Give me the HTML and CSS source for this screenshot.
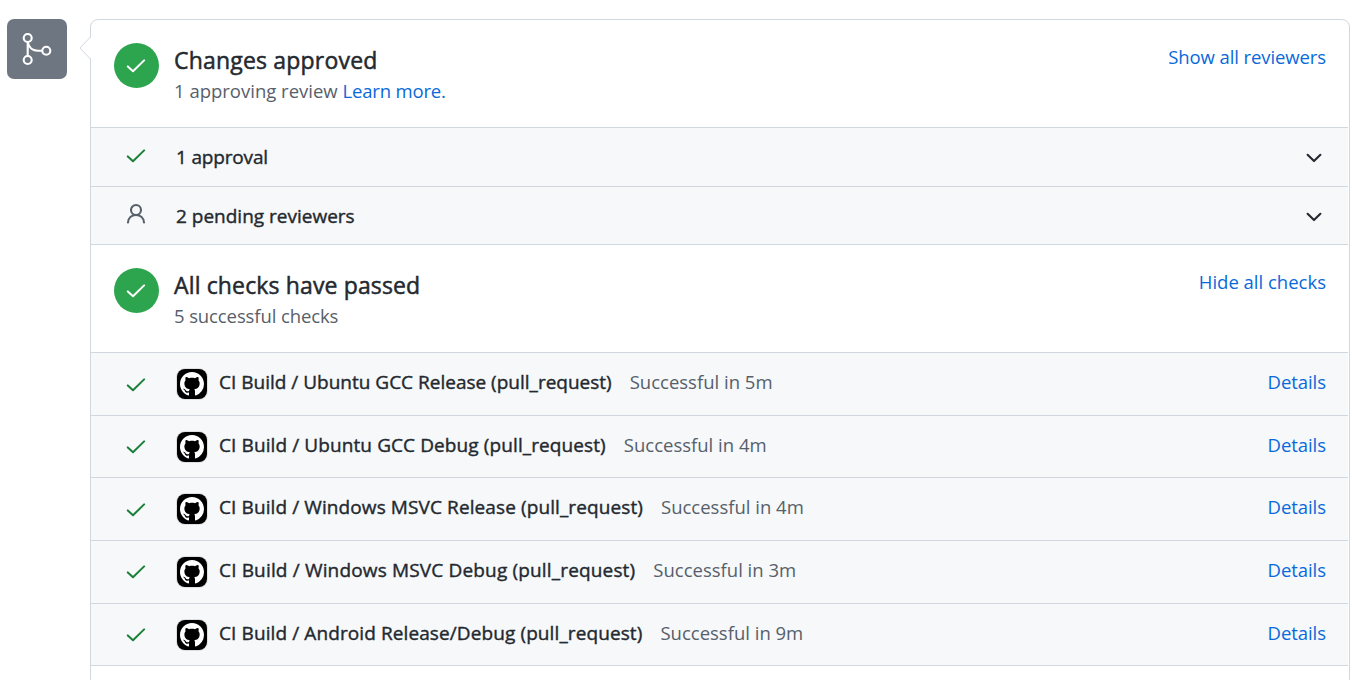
FILE: index.html
```
<!DOCTYPE html>
<html lang="en">
<head>
<meta charset="utf-8">
<title>Merge status</title>
<link rel="stylesheet" href="styles.css">
</head>
<body>
<svg class="defs" width="0" height="0" aria-hidden="true">
  <symbol id="check" viewBox="0 0 20 14"><path d="M1.8 7.4 7 12.2 18.100 1.400" fill="none" stroke="currentColor" stroke-width="2" stroke-linecap="round" stroke-linejoin="round"/></symbol>
  <symbol id="chevron" viewBox="0 0 16 10"><path d="M1.6 1.8 8 8.1l6.4-6.3" fill="none" stroke="currentColor" stroke-width="2.1" stroke-linecap="round" stroke-linejoin="round"/></symbol>
  <symbol id="mark" viewBox="0 0 16 16"><path fill="currentColor" fill-rule="evenodd" d="M8 0C3.58 0 0 3.58 0 8c0 3.54 2.29 6.53 5.47 7.59.4.07.55-.17.55-.38 0-.19-.01-.82-.01-1.49-2.01.37-2.53-.49-2.69-.94-.09-.23-.48-.94-.82-1.13-.28-.15-.68-.52-.01-.53.63-.01 1.08.58 1.23.82.72 1.21 1.87.87 2.33.66.07-.52.28-.87.51-1.07-1.78-.2-3.64-.89-3.64-3.95 0-.87.31-1.59.82-2.15-.08-.2-.36-1.02.08-2.12 0 0 .67-.21 2.2.82.64-.18 1.32-.27 2-.27s1.36.09 2 .27c1.53-1.04 2.2-.82 2.2-.82.44 1.1.16 1.92.08 2.12.51.56.82 1.27.82 2.15 0 3.07-1.87 3.75-3.65 3.95.29.25.54.73.54 1.48 0 1.07-.01 1.93-.01 2.2 0 .21.15.46.55.38A8.01 8.01 0 0 0 16 8c0-4.42-3.58-8-8-8z"/></symbol>
</svg>
<main class="timeline">
  <div class="badge">
    <svg width="60" height="60" viewBox="0 0 60 60" fill="none" stroke="#fff" stroke-width="2.1"><circle cx="20.7" cy="19" r="4"/><circle cx="20.7" cy="41" r="4"/><circle cx="39.3" cy="31.7" r="4"/><path d="M20.7 23v14M20.7 23c1 5.5 5 8.7 10 8.7h4.600"/></svg>
  </div>
  <section class="box">
    <svg class="caret" width="13" height="24" viewBox="0 0 13 24"><path d="M12 1 1 12l11 11z" fill="#fff"/><path d="M11.500 1 .8 12l10.700 11" fill="none" stroke="#d0d7de"/></svg>
    <header class="head">
      <span class="circle"><svg class="check"><use href="#check"/></svg></span>
      <div class="copy"><h3 class="t-changes">Changes approved</h3><p>1 approving review <a class="t-learn">Learn more.</a></p></div>
      <a class="action t-show">Show all reviewers</a>
    </header>
    <div class="row group">
      <svg class="check"><use href="#check"/></svg><strong class="t-one">1 approval</strong><svg class="chevron"><use href="#chevron"/></svg>
    </div>
    <div class="row group pending">
      <svg class="person" viewBox="0 0 20 21" fill="none" stroke="currentColor" stroke-width="2.1" stroke-linecap="round"><circle cx="10" cy="7" r="5"/><path d="M2 19.500C2.300 15 5.600 12 10 12s7.700 3 8 7.500"/></svg><strong class="t-two">2 pending reviewers</strong><svg class="chevron"><use href="#chevron"/></svg>
    </div>
    <header class="head second">
      <span class="circle"><svg class="check"><use href="#check"/></svg></span>
      <div class="copy"><h3 class="t-all">All checks have passed</h3><p class="t-five">5 successful checks</p></div>
      <a class="action">Hide all checks</a>
    </header>
    <div class="row ci">
      <svg class="check"><use href="#check"/></svg><span class="avatar"><svg><use href="#mark"/></svg></span><strong class="name n1">CI Build / Ubuntu GCC Release (pull_request)</strong><span class="result">Successful in 5m</span><a class="details">Details</a>
    </div>
    <div class="row ci short raised">
      <svg class="check"><use href="#check"/></svg><span class="avatar"><svg><use href="#mark"/></svg></span><strong class="name n2">CI Build / Ubuntu GCC Debug (pull_request)</strong><span class="result">Successful in 4m</span><a class="details">Details</a>
    </div>
    <div class="row ci">
      <svg class="check"><use href="#check"/></svg><span class="avatar"><svg><use href="#mark"/></svg></span><strong class="name n3">CI Build / Windows MSVC Release (pull_request)</strong><span class="result">Successful in 4m</span><a class="details">Details</a>
    </div>
    <div class="row ci raised">
      <svg class="check"><use href="#check"/></svg><span class="avatar"><svg><use href="#mark"/></svg></span><strong class="name n4">CI Build / Windows MSVC Debug (pull_request)</strong><span class="result">Successful in 3m</span><a class="details">Details</a>
    </div>
    <div class="row ci short raised">
      <svg class="check"><use href="#check"/></svg><span class="avatar"><svg><use href="#mark"/></svg></span><strong class="name n5">CI Build / Android Release/Debug (pull_request)</strong><span class="result">Successful in 9m</span><a class="details">Details</a>
    </div>
    <div class="tail"></div>
  </section>
</main>
</body>
</html>
```
FILE: styles.css
```
* { box-sizing: border-box; }
body { margin: 0; height: 680px; overflow: hidden; background: #fff; color: #24292f; font: 18.5px/26px "Open Sans", "Noto Sans", sans-serif; }
.defs { position: absolute; }
.timeline { display: flex; align-items: flex-start; gap: 23px; padding: 19px 18px 0 7px; }
.badge { width: 60px; height: 60px; border-radius: 7px; background: #6e7781; flex: none; }
.badge svg { display: block; }
.box { position: relative; flex: 1; height: 680px; border: 1px solid #d0d7de; border-radius: 8px; padding-right: 1px; }
.caret { position: absolute; left: -12px; top: 16px; }
.head { display: flex; height: 107px; padding: 23px 22px 0 23px; align-items: flex-start; }
.head.second { height: 108px; border-top: 1px solid #d0d7de; }
.circle { width: 45px; height: 45px; padding-right: 1px; border-radius: 50%; background: #2da44e; color: #fff; display: flex; align-items: center; justify-content: center; flex: none; }
.check { width: 20px; height: 14px; flex: none; color: #1a7f37; }
.circle .check { color: #fff; }
.copy { margin-left: 15px; flex: 1; white-space: nowrap; }
h3 { margin: 2px 0 0; font-size: 23px; line-height: 30px; font-weight: 400; -webkit-text-stroke: 0.5px currentColor; }
p { margin: 3px 0 0; color: #57606a; line-height: 26px; }
a { color: #0969da; }
.t-changes { letter-spacing: 0.19px; }
.t-all { letter-spacing: 0.14px; }
.t-learn { letter-spacing: -0.17px; }
.t-show { letter-spacing: -0.1px; }
.t-five { letter-spacing: -0.11px; }
.action { margin-top: 1px; white-space: nowrap; }
.row { display: flex; align-items: flex-start; background: #f6f8fa; border-top: 1px solid #d0d7de; padding: 0 22px 0 35px; white-space: nowrap; }
.group { height: 59px; }
.group.pending { height: 58px; }
.group .check { margin-top: 21px; }
.group strong { margin: 16px 0 0 30px; }
.person { width: 20px; height: 21px; margin-top: 16px; color: #57606a; }
.chevron { width: 16px; height: 10px; margin: 25px 4px 0 auto; }
strong { font-size: 19px; font-weight: 400; -webkit-text-stroke: 0.4px currentColor; }
.t-one { letter-spacing: -0.17px; }
.ci { height: 63px; }
.ci.short { height: 62px; }
.ci .check { margin-top: 25px; }
.ci.raised .check { margin-top: 24px; }
.avatar { width: 30px; height: 30px; margin: 16px 0 0 31px; border-radius: 8px; background: #000; color: #fff; display: flex; align-items: center; justify-content: center; box-shadow: 0 0 0 1px #dedfe1; }
.avatar svg { width: 24px; height: 24px; }
.name { margin: 16px 0 0 12px; }
.n2, .n3, .n5 { letter-spacing: 0.1px; }
.n4 { letter-spacing: 0.16px; }
.result { margin: 16px 0 0 18px; color: #57606a; }
.details { margin: 16px 0 0 auto; letter-spacing: -0.06px; }
.tail { border-top: 1px solid #d0d7de; }
```
